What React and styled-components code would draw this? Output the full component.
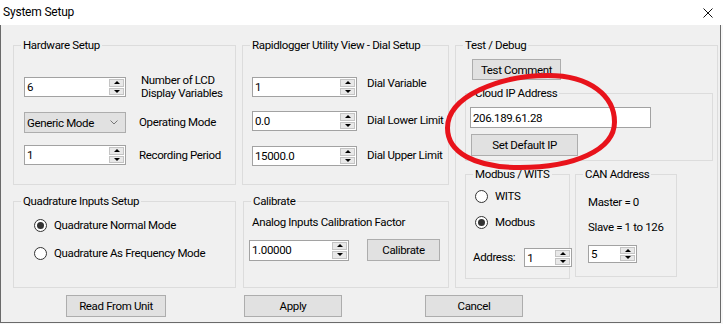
import React from "react";
import styled, { createGlobalStyle } from "styled-components";

const GlobalStyle = createGlobalStyle`
  html, body { margin: 0; padding: 0; background: #f7f7f7; }
  body {
    font-family: Roboto, "Liberation Sans", Arial, sans-serif;
    font-size: 11.5px;
    letter-spacing: -0.35px;
    color: #000;
  }
  * { box-sizing: border-box; }
`;

export default function App() {
  return (
    <>
      <GlobalStyle />
      <Window>
        <TitleBar>
          <span>System Setup</span>
          <CloseIcon viewBox="0 0 10 10">
            <path d="M0.5 0.5 L9.5 9.5 M9.5 0.5 L0.5 9.5" stroke="#111" strokeWidth="1" />
          </CloseIcon>
        </TitleBar>

        <Body>
          <Columns>
            <Column $w={223}>
              <Group $h={140}>
                <Legend>Hardware Setup</Legend>
                <Inner $pad="31px 0 0 10px">
                  <Row $gap={15} $h={20}>
                    <Spin value="6" $w={102} $h={20} />
                    <Label $two>Number of LCD<br />Display Variables</Label>
                  </Row>
                  <Row $gap={13} $h={21} $mt={15}>
                    <Combo>
                      <span>Generic Mode</span>
                      <svg width="8" height="5" viewBox="0 0 8 5">
                        <path d="M0.5 0.5 L4 4 L7.5 0.5" fill="none" stroke="#777" strokeWidth="1" />
                      </svg>
                    </Combo>
                    <Label>Operating Mode</Label>
                  </Row>
                  <Row $gap={13} $h={20} $mt={12}>
                    <Spin value="1" $w={102} $h={20} />
                    <Label>Recording Period</Label>
                  </Row>
                </Inner>
              </Group>

              <Group $h={87}>
                <Legend>Quadrature Inputs Setup</Legend>
                <Inner $pad="16px 0 0 20px">
                  <Radio checked label="Quadrature Normal Mode" />
                  <Radio label="Quadrature As Frequency Mode" $mt={14} />
                </Inner>
              </Group>
            </Column>

            <Column $w={207}>
              <Group $h={140}>
                <Legend>Rapidlogger Utility View - Dial Setup</Legend>
                <Inner $pad="31px 0 0 9px">
                  <Row $gap={10} $h={20}>
                    <Spin value="1" $w={105} $h={20} />
                    <Label $mt={-7}>Dial Variable</Label>
                  </Row>
                  <Row $gap={10} $h={20} $mt={14}>
                    <Spin value="0.0" $w={105} $h={20} />
                    <Label $mt={-2}>Dial Lower Limit</Label>
                  </Row>
                  <Row $gap={10} $h={20} $mt={15}>
                    <Spin value="15000.0" $w={105} $h={20} />
                    <Label $mt={-2}>Dial Upper Limit</Label>
                  </Row>
                </Inner>
              </Group>

              <Group $h={87} $ml={1}>
                <Legend>Calibrate</Legend>
                <Inner $pad="13px 0 0 8px">
                  <Label>Analog Inputs Calibration Factor</Label>
                  <Row $gap={18} $h={22} $mt={9} $ml={-3}>
                    <Spin value="1.00000" $w={100} $h={21} />
                    <Button $w={73} $h={22}>Calibrate</Button>
                  </Row>
                </Inner>
              </Group>
            </Column>

            <Column $w={263}>
              <Group $h={243}>
                <Legend>Test / Debug</Legend>
                <Inner $pad="13px 0 0 9px">
                  <Button $w={89} $h={21} $ml={7}>Test Comment</Button>
                  <Group $h={68} $w={248} $mt={13}>
                    <Legend>Cloud IP Address</Legend>
                    <Inner $pad="13px 0 0 4px">
                      <TextBox $w={181}>206.189.61.28</TextBox>
                      <Button $w={107} $h={22} $ml={1} $mt={6}>Set Default IP</Button>
                    </Inner>
                  </Group>
                  <SubRow>
                    <Group $h={105} $w={105}>
                      <Legend>Modbus / WITS</Legend>
                      <Inner $pad="14px 0 0 9px">
                        <Radio label="WITS" />
                        <Radio checked label="Modbus" $mt={12} />
                        <Row $gap={9} $h={19} $mt={19} $ml={-2}>
                          <Label>Address:</Label>
                          <Spin value="1" $w={48} $h={19} />
                        </Row>
                      </Inner>
                    </Group>
                    <Group $h={103} $w={102}>
                      <Legend>CAN Address</Legend>
                      <Inner $pad="20px 0 0 12px">
                        <Label>Master = 0</Label>
                        <Label $mt={10}>Slave = 1 to 126</Label>
                        <SpinWrap $mt={10}>
                          <Spin value="5" $w={49} $h={18} />
                        </SpinWrap>
                      </Inner>
                    </Group>
                  </SubRow>
                </Inner>
              </Group>
            </Column>
          </Columns>

          <ButtonRow>
            <Button $w={100} $h={22}>Read From Unit</Button>
            <Button $w={98} $h={22} $ml={78}>Apply</Button>
            <Button $w={98} $h={22} $ml={83}>Cancel</Button>
          </ButtonRow>
        </Body>

        <Annotation width="723" height="324" viewBox="0 0 723 324">
          <path
            d="M447.5 128 C447.5 96, 500 75.5, 548 75.5 C590 75.5, 614.5 96, 614.5 122 C614.5 150, 574 167.5, 520 167.5 C474 167.5, 447.5 152, 447.5 128 Z"
            fill="none"
            stroke="#e8131b"
            strokeWidth="5"
          />
        </Annotation>
      </Window>
    </>
  );
}

function Spin({ value, $w, $h }) {
  return (
    <SpinBox $w={$w} $h={$h}>
      <SpinText>{value}</SpinText>
      <SpinButtons>
        <SpinBtn><Arrow $up /></SpinBtn>
        <SpinBtn><Arrow /></SpinBtn>
      </SpinButtons>
    </SpinBox>
  );
}

function Radio({ checked, label, $mt }) {
  return (
    <RadioRow $mt={$mt}>
      <RadioCircle>{checked && <RadioDot />}</RadioCircle>
      <span>{label}</span>
    </RadioRow>
  );
}

const Window = styled.div`
  position: relative;
  width: 723px;
  height: 324px;
`;

const TitleBar = styled.div`
  height: 25px;
  width: 723px;
  background: #ffffff;
  display: flex;
  align-items: center;
  justify-content: space-between;
  padding: 0 10px 1px 3px;
  font-size: 12px;
  letter-spacing: -0.2px;
`;

const CloseIcon = styled.svg`
  width: 10px;
  height: 10px;
  margin-top: 1px;
`;

const Body = styled.div`
  width: 721px;
  height: 298px;
  background: #f0f0f0;
  border: 1px solid #6a6a6a;
  border-top: none;
  padding: 20px 0 0 12px;
`;

const Columns = styled.div`
  display: flex;
  gap: 6px;
`;

const Column = styled.div`
  width: ${(p) => p.$w}px;
  display: flex;
  flex-direction: column;
  gap: 16px;
`;

const Group = styled.div`
  position: relative;
  height: ${(p) => p.$h}px;
  width: ${(p) => (p.$w ? `${p.$w}px` : "auto")};
  margin-left: ${(p) => p.$ml || 0}px;
  margin-top: ${(p) => p.$mt || 0}px;
  border: 1px solid #dcdcdc;
  flex-shrink: 0;
`;

const Legend = styled.span`
  position: absolute;
  top: -8px;
  left: 7px;
  padding: 0 2px;
  background: #f0f0f0;
  line-height: 15px;
  white-space: nowrap;
`;

const Inner = styled.div`
  padding: ${(p) => p.$pad};
  display: flex;
  flex-direction: column;
  align-items: flex-start;
`;

const Row = styled.div`
  display: flex;
  align-items: center;
  height: ${(p) => p.$h}px;
  gap: ${(p) => p.$gap}px;
  margin-top: ${(p) => p.$mt || 0}px;
  margin-left: ${(p) => p.$ml || 0}px;
`;

const SubRow = styled.div`
  display: flex;
  gap: 5px;
  margin-top: 13px;
  align-items: flex-start;
`;

const Label = styled.div`
  line-height: ${(p) => (p.$two ? "13px" : "15px")};
  white-space: nowrap;
  margin-top: ${(p) => p.$mt || 0}px;
`;

const SpinWrap = styled.div`
  margin-top: ${(p) => p.$mt || 0}px;
`;

const SpinBox = styled.div`
  width: ${(p) => p.$w}px;
  height: ${(p) => p.$h}px;
  background: #ffffff;
  border: 1px solid #a2a2a2;
  display: flex;
  flex-shrink: 0;
`;

const SpinText = styled.div`
  flex: 1;
  padding-left: 2px;
  display: flex;
  align-items: center;
`;

const SpinButtons = styled.div`
  width: 16px;
  display: flex;
  flex-direction: column;
  gap: 1px;
  padding: 1px 1px 1px 0;
`;

const SpinBtn = styled.div`
  flex: 1;
  background: #e8e8e8;
  border: 1px solid #c4c4c4;
  display: flex;
  align-items: center;
  justify-content: center;
`;

const Arrow = styled.div`
  width: 0;
  height: 0;
  border-left: 3px solid transparent;
  border-right: 3px solid transparent;
  ${(p) => (p.$up ? "border-bottom: 3px solid #000;" : "border-top: 3px solid #000;")}
`;

const Combo = styled.div`
  width: 102px;
  height: 21px;
  background: #e1e1e1;
  border: 1px solid #adadad;
  display: flex;
  align-items: center;
  justify-content: space-between;
  padding: 0 7px 0 2px;
  flex-shrink: 0;
`;

const TextBox = styled.div`
  width: ${(p) => p.$w}px;
  height: 21px;
  background: #ffffff;
  border: 1px solid #a2a2a2;
  padding-left: 2px;
  display: flex;
  align-items: center;
`;

const Button = styled.div`
  width: ${(p) => p.$w}px;
  height: ${(p) => p.$h}px;
  margin-left: ${(p) => p.$ml || 0}px;
  margin-top: ${(p) => p.$mt || 0}px;
  background: #e1e1e1;
  border: 1px solid #adadad;
  display: flex;
  align-items: center;
  justify-content: center;
  white-space: nowrap;
  flex-shrink: 0;
`;

const ButtonRow = styled.div`
  display: flex;
  margin-top: 7px;
  padding-left: 53px;
`;

const RadioRow = styled.div`
  display: flex;
  align-items: center;
  gap: 7px;
  margin-top: ${(p) => p.$mt || 0}px;
  white-space: nowrap;
`;

const RadioCircle = styled.div`
  width: 13px;
  height: 13px;
  border-radius: 50%;
  border: 1px solid #333333;
  background: #ffffff;
  display: flex;
  align-items: center;
  justify-content: center;
  flex-shrink: 0;
`;

const RadioDot = styled.div`
  width: 7px;
  height: 7px;
  border-radius: 50%;
  background: #333333;
`;

const Annotation = styled.svg`
  position: absolute;
  left: 0;
  top: 0;
  pointer-events: none;
`;
